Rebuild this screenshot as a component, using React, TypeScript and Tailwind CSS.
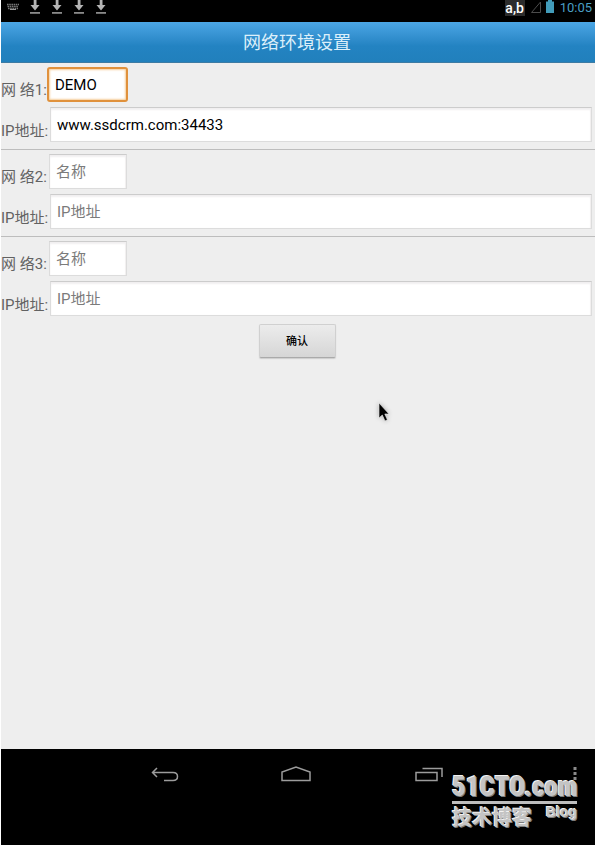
import React from "react";

type Network = { id: number; name: string; address: string; focused?: boolean };

const networks: Network[] = [
  { id: 1, name: "DEMO", address: "www.ssdcrm.com:34433", focused: true },
  { id: 2, name: "", address: "" },
  { id: 3, name: "", address: "" },
];

function KeyboardIcon() {
  return (
    <svg width="22" height="16" viewBox="0 0 22 16" aria-hidden="true">
      <path d="M5 4.5h12M5.5 6.5h11M6 8.5h10" stroke="#777" strokeWidth="1.3" strokeDasharray="1.6 .6" />
      <path d="M8 9.5h6" stroke="#999" strokeWidth="1" />
    </svg>
  );
}

function DownloadIcon() {
  return (
    <svg width="22" height="16" viewBox="0 0 22 16" aria-hidden="true">
      <path d="M9.7 0h2.8v5h3L11 10.5 6.500 5h3.2z" fill="#b4b4b4" />
      <path d="M6 12h10v1.8H6z" fill="#8a8a8a" />
    </svg>
  );
}

function StatusBar() {
  return (
    <div className="flex h-[22px] items-start justify-between bg-black pr-[3px] pl-px">
      <div className="flex">
        <KeyboardIcon />
        <DownloadIcon />
        <DownloadIcon />
        <DownloadIcon />
        <DownloadIcon />
      </div>
      <div className="flex items-start">
        <span className="h-4 w-5 bg-[#2c2c2c] text-center text-sm leading-4 font-medium text-white">a,b</span>
        <svg width="35" height="16" viewBox="0 0 35 16" aria-hidden="true">
          <path d="M6.500 12.500L15.500 2v10.500z" fill="none" stroke="#4c4c4c" />
          <path d="M21 1.500h2V0h4v1.500h2V13h-8z" fill="#429cba" />
        </svg>
        <span className="text-[13px] leading-4 text-[#4a9fc4]">10:05</span>
      </div>
    </div>
  );
}

const fieldBase = "h-[35px] bg-white text-[15px] text-black outline-none placeholder:text-[#7b7b7b]";
const fieldPlain =
  "border border-[#dcdcdc] border-t-[#cccccc] px-1.5 shadow-[inset_0_2px_2px_#f1eff0,inset_-1px_0_1px_#f1eff0]";
const fieldFocused = "rounded-[3px] border-2 border-[#e0913c] px-1.5 shadow-[inset_0_0_2px_1px_#f6cf9c]";

function NetworkGroup({ id, name, address, focused }: Network) {
  return (
    <div className="flex flex-col gap-[5px] pt-1">
      <div className="flex items-end">
        <label htmlFor={`name-${id}`} className={`${focused ? "w-[46px]" : "w-12"} leading-6 whitespace-nowrap`}>
          网 络{id}:
        </label>
        <input
          id={`name-${id}`}
          type="text"
          defaultValue={name}
          placeholder="名称"
          className={`${fieldBase} ${focused ? `w-[81px] ${fieldFocused}` : `w-[78px] ${fieldPlain}`}`}
        />
      </div>
      <div className="flex items-end pr-[3px]">
        <label htmlFor={`ip-${id}`} className="w-[49px] leading-[22px] whitespace-nowrap">
          IP地址:
        </label>
        <input
          id={`ip-${id}`}
          type="text"
          defaultValue={address}
          placeholder="IP地址"
          className={`${fieldBase} min-w-0 flex-1 ${fieldPlain}`}
        />
      </div>
    </div>
  );
}

function NavBar() {
  return (
    <nav className="grid h-24 grid-cols-[1fr_auto_1fr] items-start bg-black pt-3">
      <span />
      <div className="flex pr-0.5">
        <button type="button" aria-label="Back" className="flex w-[132px] justify-center">
          <svg width="28" height="26" viewBox="0 0 28 26" fill="none" stroke="#9c9c9c" strokeWidth="1.5">
            <path d="M6 7L1.500 11.500 6 16M2 11.500h20q4.500 0 4.500 4t-4.500 4h-9" />
          </svg>
        </button>
        <button type="button" aria-label="Home" className="flex w-[132px] justify-center">
          <svg width="32" height="26" viewBox="0 0 32 26" fill="none" stroke="#9c9c9c" strokeWidth="1.5">
            <path d="M1 19.500V11L15 6l14 5v8.500z" />
          </svg>
        </button>
        <button type="button" aria-label="Recent apps" className="flex w-[132px] justify-center">
          <svg width="28" height="26" viewBox="0 0 28 26" fill="none" stroke="#9c9c9c" strokeWidth="1.5">
            <path d="M1 11.500h21v8H1zM7.500 7.500H27V16" />
          </svg>
        </button>
      </div>
      <button type="button" aria-label="Menu" className="flex justify-self-end pr-[14px]">
        <svg width="12" height="26" viewBox="0 0 12 26" fill="#8a8a8a">
          <path d="M4.500 6h3v3h-3zM4.500 11h3v3h-3zM4.500 16h3v3h-3z" />
        </svg>
      </button>
    </nav>
  );
}

function Watermark() {
  return (
    <div className="pointer-events-none absolute right-[18px] bottom-[13px] w-[125px] font-bold text-[#c4c4c4] [text-shadow:-1px_-1px_0_#f2f2f2,1px_1px_0_#7d7d7d]">
      <div className="border-b-[3px] border-[#bdbdbd] font-['Roboto_Condensed','Open_Sans_Condensed','Roboto',sans-serif] text-[27px] leading-7 font-black whitespace-nowrap">
        51CTO.com
      </div>
      <div className="flex justify-between whitespace-nowrap">
        <span className="text-xl leading-7">技术博客</span>
        <span className="font-['Liberation_Sans',sans-serif] text-sm leading-4">Blog</span>
      </div>
    </div>
  );
}

export default function App() {
  return (
    <div className="relative flex min-h-screen flex-col bg-white pl-px font-['Roboto','Noto_Sans_CJK_SC',sans-serif]">
      <StatusBar />
      <header className="flex h-[41px] items-center justify-center border-b border-[#3d7ba3] bg-linear-to-b from-[#4ba6e5] via-[#2383c2] via-60% to-[#2180bc] pt-0.5 pr-0.5">
        <h1 className="text-lg leading-8 text-[#dceffa]">网络环境设置</h1>
      </header>
      <main className="flex-1 bg-[#eeeeee] text-[15px] text-[#626262]">
        <form>
          {networks.map((n, i) => (
            <React.Fragment key={n.id}>
              {i > 0 && <hr className="mt-[7px] border-[#bdbdbd]" />}
              <NetworkGroup {...n} />
            </React.Fragment>
          ))}
          <div className="mt-2 flex justify-center pr-0.5">
            <button
              type="button"
              className="h-[34px] w-[77px] rounded-xs border border-[#d0d0d0] border-b-[#aaa] bg-linear-to-b from-[#ececec] to-[#d6d6d6] pt-0.5 text-[11px] font-medium text-black shadow-[0_1px_1px_#ccc]"
            >
              确认
            </button>
          </div>
        </form>
      </main>
      <NavBar />
      <Watermark />
      <svg
        className="pointer-events-none absolute top-[402px] left-[377px] drop-shadow-[0_0_2px_#aaa]"
        width="14"
        height="22"
        viewBox="0 0 14 22"
        aria-hidden="true"
      >
        <path d="M2 1v15l3.300-3L8 19l2.400-1.200L7.800 12H12z" fill="#000" stroke="#eee" strokeWidth=".6" />
      </svg>
    </div>
  );
}
